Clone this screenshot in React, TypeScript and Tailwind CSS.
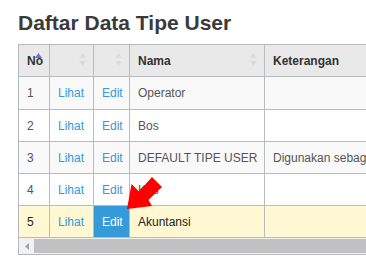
import React from "react";

type Row = {
  no: number;
  nama: string;
  ket: string;
};

const rows: Row[] = [
  { no: 1, nama: "Operator", ket: "" },
  { no: 2, nama: "Bos", ket: "" },
  { no: 3, nama: "DEFAULT TIPE USER", ket: "Digunakan sebagai default" },
  { no: 4, nama: "Kas", ket: "" },
  { no: 5, nama: "Akuntansi", ket: "" },
];

function SortIcon({ active }: { active?: boolean }) {
  return (
    <svg
      width="7"
      height="13"
      viewBox="0 0 7 13"
      className="absolute right-[7px] top-[8px]"
    >
      <polygon points="3.5,0 7,5 0,5" fill={active ? "#6b72d6" : "#dcdcdc"} />
      {!active && <polygon points="0,8 7,8 3.5,13" fill="#dcdcdc" />}
    </svg>
  );
}

export default function App() {
  const cell = "border-r border-b border-[#b9bcbf] px-2 text-left align-middle";

  return (
    <div
      className="relative min-h-[268px] w-[366px] overflow-hidden bg-white pt-[11px]"
      style={{ fontFamily: '"Liberation Sans", Arial, sans-serif' }}
    >
      <h1 className="ml-[18px] mb-[9px] text-[21px] font-bold leading-[24px] text-[#3a3a3a]">
        Daftar Data Tipe User
      </h1>

      <div className="ml-[18px] overflow-hidden border-l border-t border-b border-[#b4b9bd]">
        <table className="table-fixed border-separate border-spacing-0 text-[12px] w-[446px]">
          <thead>
            <tr className="bg-[#e9e9e9] text-[#333]">
              <th className={`${cell} relative h-[32px] w-[31px] font-bold`}>
                No
                <SortIcon active />
              </th>
              <th className={`${cell} relative w-[44px]`}>
                <SortIcon />
              </th>
              <th className={`${cell} relative w-[36px]`}>
                <SortIcon />
              </th>
              <th className={`${cell} relative w-[135px] font-bold`}>
                Nama
                <SortIcon />
              </th>
              <th className={`${cell} w-[200px] font-bold`}>Keterangan</th>
            </tr>
          </thead>
          <tbody>
            {rows.map((r, i) => {
              const selected = r.no === 5;
              const bg = selected
                ? "bg-[#fff8d3] text-[#222]"
                : i % 2 === 0
                  ? "bg-[#f9f9f9] text-[#555]"
                  : "bg-white text-[#555]";
              return (
                <tr key={r.no} className={bg}>
                  <td className={`${cell} ${i === 0 ? "h-[33px]" : "h-[32px]"}`}>{r.no}</td>
                  <td className={`${cell} text-[#3498db]`}>Lihat</td>
                  <td
                    className={`${cell} ${selected ? "bg-[#3699d8] text-white" : "text-[#3498db]"}`}
                  >
                    Edit
                  </td>
                  <td className={`${cell} whitespace-nowrap`}>{r.nama}</td>
                  <td className={`${cell} whitespace-nowrap overflow-hidden`}>{r.ket}</td>
                </tr>
              );
            })}
          </tbody>
        </table>

        {/* horizontal scrollbar */}
        <div className="flex h-[16px] bg-[#f1f1f1]">
          <div className="flex w-[15px] shrink-0 items-center justify-center">
            <svg width="4" height="7" viewBox="0 0 4 7">
              <polygon points="4,0 4,7 0,3.5" fill="#a3a3a3" />
            </svg>
          </div>
          <div className="my-[1px] flex-1 bg-[#c1c1c1]" />
        </div>
      </div>

      {/* red pointer arrow */}
      <svg
        className="absolute left-0 top-0"
        width="366"
        height="268"
        viewBox="0 0 366 268"
      >
        <polygon
          points="127,209 131.5,184 139,191.5 152,177 162,187 148.5,200 152,206"
          fill="#ff0000"
        />
      </svg>
    </div>
  );
}
